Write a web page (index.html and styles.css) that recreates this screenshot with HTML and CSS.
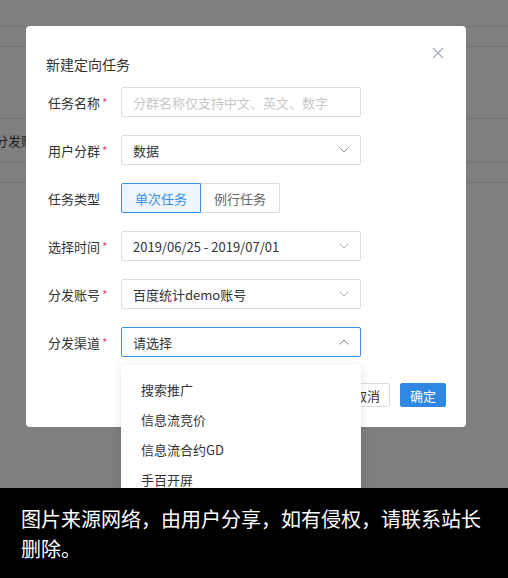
FILE: index.html
```html
<!DOCTYPE html>
<html>
<head>
    <meta charset="UTF-8" name="viewport" content="width=device-width, initial-scale=1.0"/>
    <title>新建定向任务</title>
    <link rel="stylesheet" href="styles.css">
</head>
<body>
    <div class="page">
        <div class="row head"></div>
        <div class="row h20"></div>
        <div class="row h72"></div>
        <div class="row h44"><span class="cell">分发账号</span></div>
        <div class="row"></div>
    </div>

    <div class="modal">
        <svg class="close" width="12" height="12" viewBox="0 0 12 12">
            <path d="M1 1 L11 11 M11 1 L1 11" stroke="#a2acba" stroke-width="1.2" fill="none"/>
        </svg>
        <h3 class="title">新建定向任务</h3>
        <div class="form">
            <div class="item">
                <label>任务名称<i>*</i></label>
                <div class="field placeholder">分群名称仅支持中文、英文、数字</div>
            </div>
            <div class="item">
                <label>用户分群<i>*</i></label>
                <div class="field select">数据
                    <svg width="10" height="6" viewBox="0 0 10 6"><polyline points="0.5,0.5 5,5 9.5,0.5" stroke="#9a9a9a" fill="none"/></svg>
                </div>
            </div>
            <div class="item">
                <label>任务类型</label>
                <div class="seg">
                    <span class="on">单次任务</span>
                    <span>例行任务</span>
                </div>
            </div>
            <div class="item">
                <label>选择时间<i>*</i></label>
                <div class="field select">2019/06/25 - 2019/07/01
                    <svg width="10" height="6" viewBox="0 0 10 6"><polyline points="0.5,0.5 5,5 9.5,0.5" stroke="#b0b0b0" fill="none"/></svg>
                </div>
            </div>
            <div class="item">
                <label>分发账号<i>*</i></label>
                <div class="field select">百度统计demo账号
                    <svg width="10" height="6" viewBox="0 0 10 6"><polyline points="0.5,0.5 5,5 9.5,0.5" stroke="#b0b0b0" fill="none"/></svg>
                </div>
            </div>
            <div class="item">
                <label>分发渠道<i>*</i></label>
                <div class="field select active">请选择
                    <svg width="10" height="6" viewBox="0 0 10 6"><polyline points="0.5,5.5 5,1 9.5,5.5" stroke="#8a8a8a" fill="none"/></svg>
                </div>
            </div>
        </div>
        <div class="footer">
            <button class="btn">取消</button>
            <button class="btn primary">确定</button>
        </div>

        <ul class="dropdown">
            <li>搜索推广</li>
            <li>信息流竞价</li>
            <li>信息流合约GD</li>
            <li>手百开屏</li>
        </ul>
    </div>

    <div class="notice">图片来源网络，由用户分享，如有侵权，请联系站长删除。</div>
</body>
</html>
```

FILE: styles.css
```css
body {
    margin: 0;
    width: 508px;
    height: 578px;
    overflow: hidden;
    position: relative;
    background: #7f7f7f;
    font-family: "Noto Sans CJK SC", "Noto Sans", sans-serif;
    font-size: 13px;
    color: #333;
}
.page .row {
    border-bottom: 1px solid #747474;
    height: 19px;
}
.page .head { height: 26px; }
.page .h72 { height: 71px; }
.page .h44 {
    height: 43px;
    display: flex;
    align-items: center;
}
.page .cell {
    margin-left: -5px;
    color: #1f1f1f;
}
.modal {
    position: absolute;
    left: 26px;
    top: 26px;
    width: 440px;
    box-sizing: border-box;
    padding: 29px 20px 20px;
    background: #fff;
    border-radius: 4px;
}
.close {
    position: absolute;
    left: 406px;
    top: 21px;
}
.title {
    margin: 0;
    font-size: 14px;
    font-weight: normal;
    line-height: 18px;
    color: #333;
}
.form {
    margin-top: 14px;
    display: flex;
    flex-direction: column;
    gap: 18px;
}
.item {
    display: flex;
    align-items: center;
    height: 30px;
}
.item label {
    width: 73px;
    padding-left: 2px;
    color: #333;
}
.item label i {
    font-style: normal;
    color: #f0506e;
    font-size: 12px;
    margin-left: 2px;
}
.field {
    width: 240px;
    height: 30px;
    box-sizing: border-box;
    border: 1px solid #dcdcdc;
    border-radius: 2px;
    padding: 0 11px;
    display: flex;
    align-items: center;
    justify-content: space-between;
    color: #333;
}
.placeholder { color: #c8c8c8; }
.active { border-color: #3a8ee6; }
.seg {
    display: flex;
    height: 30px;
}
.seg span {
    width: 79px;
    box-sizing: border-box;
    border: 1px solid #dcdcdc;
    display: flex;
    align-items: center;
    justify-content: center;
    color: #666;
}
.seg span:first-child {
    width: 80px;
    border-radius: 2px 0 0 2px;
}
.seg span:last-child {
    border-left: none;
    border-radius: 0 2px 2px 0;
}
.seg .on {
    border-color: #3a8ee6;
    background: #eef5fd;
    color: #3a8ee6;
}
.footer {
    margin-top: 26px;
    display: flex;
    justify-content: flex-end;
    gap: 10px;
}
.btn {
    width: 46px;
    height: 24px;
    border: 1px solid #dcdcdc;
    border-radius: 2px;
    background: #fff;
    font-family: inherit;
    font-size: 13px;
    color: #333;
    padding: 0;
}
.btn.primary {
    background: #2f86e3;
    border-color: #2f86e3;
    color: #fff;
}
.dropdown {
    position: absolute;
    left: 95px;
    top: 339px;
    width: 240px;
    margin: 0;
    padding: 10px 0;
    list-style: none;
    background: #fff;
    border-radius: 4px;
    box-shadow: 0 2px 10px rgba(0, 0, 0, 0.12);
}
.dropdown li {
    height: 30px;
    line-height: 30px;
    padding-left: 20px;
    color: #333;
}
.notice {
    position: absolute;
    left: 0;
    right: 0;
    bottom: 0;
    height: 90px;
    box-sizing: border-box;
    padding: 16px 21px 0;
    background: #000;
    color: #fff;
    font-size: 20px;
    line-height: 30px;
}
```
